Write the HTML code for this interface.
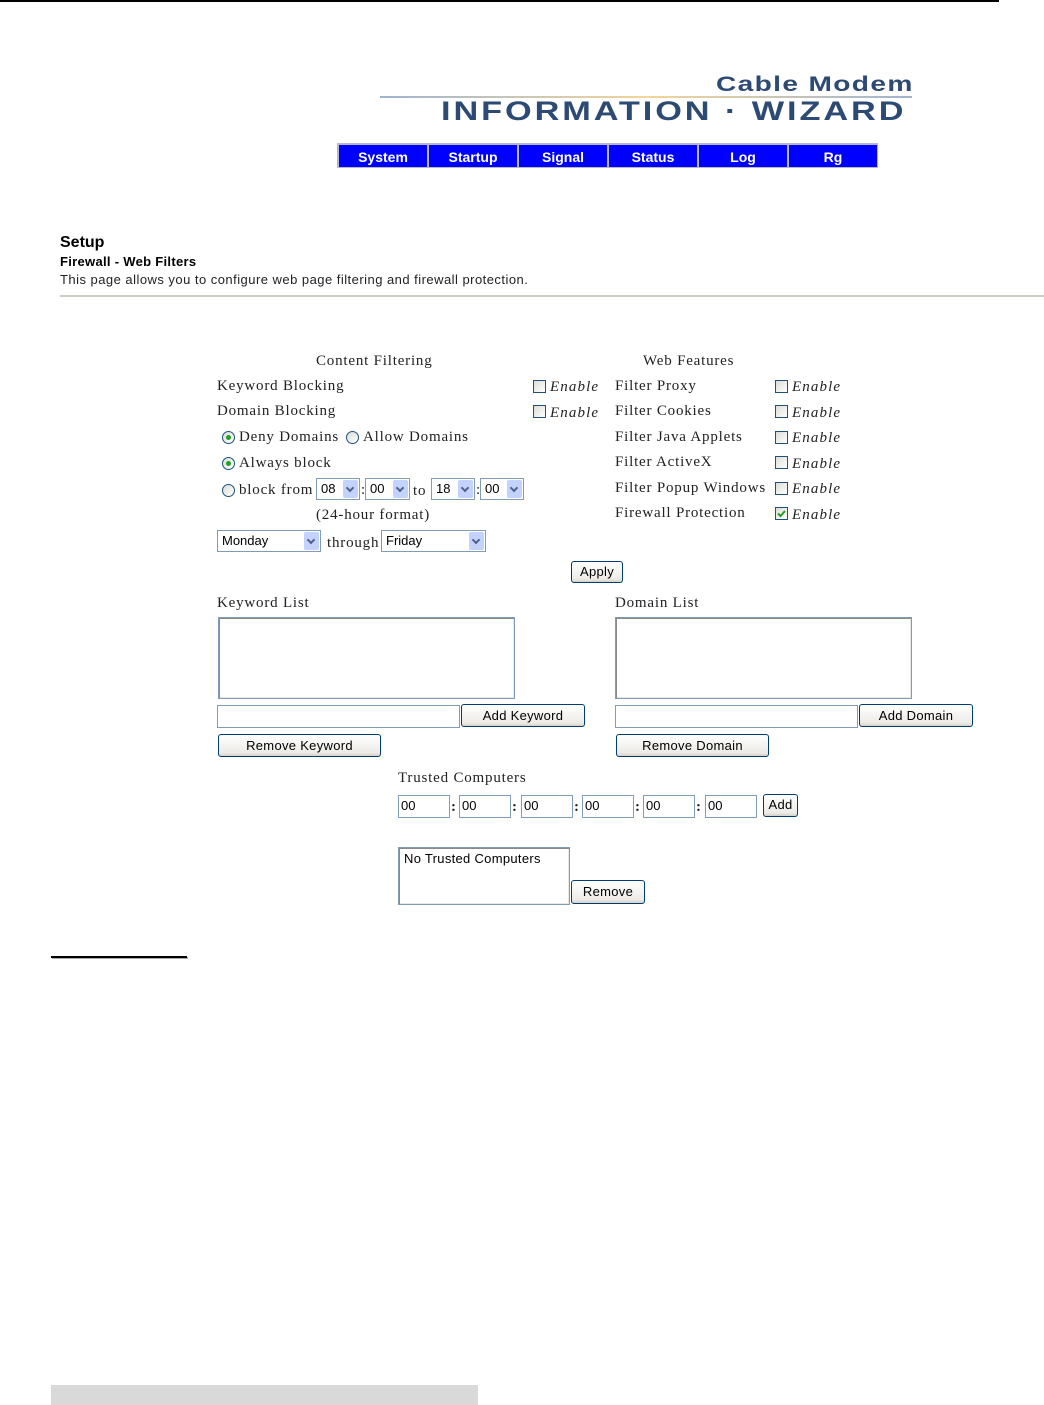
<!DOCTYPE html>
<html><head><meta charset="utf-8"><style>
html,body{margin:0;padding:0;background:#fff;width:1044px;height:1405px;overflow:hidden;position:relative}
.a{position:absolute;white-space:nowrap}
.s{font-family:"Liberation Serif",serif;font-size:15px;color:#222;line-height:18px;letter-spacing:0.8px}
.f{font-family:"Liberation Sans",sans-serif;color:#000}
.cb{position:absolute;width:11px;height:11px;border:1px solid #1c5180;background:linear-gradient(135deg,#dcdcd6,#fff)}
.en{font-family:"Liberation Serif",serif;font-style:italic;font-size:15px;color:#222;line-height:18px;letter-spacing:1.1px}
.rd{position:absolute;width:11px;height:11px;border:1px solid #1c5180;border-radius:50%;background:linear-gradient(135deg,#dcdcd6,#fff)}
.rd.on::after{content:"";position:absolute;left:3px;top:3px;width:5px;height:5px;border-radius:50%;background:#21a121}
.sel{position:absolute;height:20px;border:1px solid #7f9db9;background:#fff;font-family:"Liberation Sans",sans-serif;font-size:13px;line-height:20px;box-sizing:content-box}
.sel span{position:absolute;left:4px;top:0}
.sel i{position:absolute;right:1px;top:1px;width:15px;height:18px;background:#c3d3fd;border-radius:2px}
.sel i::after{content:"";position:absolute;left:4px;top:5px;width:4px;height:4px;border-right:2px solid #4d6185;border-bottom:2px solid #4d6185;transform:rotate(45deg)}
.btn{position:absolute;border:1px solid #003c74;border-radius:3px;background:linear-gradient(#fff,#ecebe6 85%,#d6d0c5);font-family:"Liberation Sans",sans-serif;font-size:13px;text-align:center;color:#000;box-sizing:border-box;letter-spacing:0.3px}
.in{position:absolute;border:1px solid #7f9db9;background:#fff;box-sizing:border-box;font-family:"Liberation Sans",sans-serif;font-size:13px;padding-left:2px;line-height:20px}
.ta{position:absolute;border:1px solid #7f9db9;background:#fff;box-sizing:border-box;box-shadow:inset 1px 1px 0 #8a8a86,inset -1px -1px 0 #e8e8e4}
.nav{position:absolute;top:144px;height:22px;width:88px;background:#0000ff;color:#fff;font-family:"Liberation Sans",sans-serif;font-weight:bold;font-size:14px;text-align:center;line-height:24px;border:1px solid #b8b8c8}
</style></head><body>
<div class="a" style="left:0;top:0;width:999px;height:2px;background:#000"></div>

<div class="a f" style="left:716px;top:73px;font-size:21px;font-weight:bold;color:#2c4a73;letter-spacing:1px;transform:scaleX(1.34);transform-origin:0 0">Cable Modem</div>
<div class="a" style="left:380px;top:96px;width:532px;height:2px;background:linear-gradient(90deg,#9fb4d0,#f2d59a 50%,#9fb4d0)"></div>
<div class="a f" style="left:441px;top:96px;font-size:27px;font-weight:bold;color:#2c4a73;letter-spacing:2.3px;transform:scaleX(1.27);transform-origin:0 0">INFORMATION · WIZARD</div>

<div class="a" style="left:337px;top:143px;width:541px;height:25px;background:#b8b8c8"></div>
<div class="nav" style="left:338px">System</div>
<div class="nav" style="left:428px">Startup</div>
<div class="nav" style="left:518px">Signal</div>
<div class="nav" style="left:608px">Status</div>
<div class="nav" style="left:698px">Log</div>
<div class="nav" style="left:788px">Rg</div>

<div class="a f" style="left:60px;top:234px;font-size:16px;font-weight:bold">Setup</div>
<div class="a f" style="left:60px;top:254px;font-size:13px;font-weight:bold;letter-spacing:0.3px">Firewall - Web Filters</div>
<div class="a f" style="left:60px;top:272px;font-size:13px;color:#222;letter-spacing:0.47px">This page allows you to configure web page filtering and firewall protection.</div>
<div class="a" style="left:60px;top:295px;width:984px;height:2px;background:#cfcbbd"></div>

<div class="a s" style="left:316px;top:352px">Content Filtering</div>
<div class="a s" style="left:643px;top:352px">Web Features</div>

<div class="a s" style="left:217px;top:377px">Keyword Blocking</div>
<div class="cb" style="left:533px;top:380px"></div><div class="a en" style="left:550px;top:378px">Enable</div>
<div class="a s" style="left:217px;top:402px">Domain Blocking</div>
<div class="cb" style="left:533px;top:405px"></div><div class="a en" style="left:550px;top:404px">Enable</div>
<div class="rd on" style="left:222px;top:431px"></div><div class="a s" style="left:239px;top:428px">Deny Domains</div>
<div class="rd" style="left:346px;top:431px"></div><div class="a s" style="left:363px;top:428px">Allow Domains</div>
<div class="rd on" style="left:222px;top:457px"></div><div class="a s" style="left:239px;top:454px">Always block</div>
<div class="rd" style="left:222px;top:484px"></div><div class="a s" style="left:239px;top:481px">block from</div>
<div class="sel" style="left:316px;top:478px;width:42px"><span>08</span><i></i></div>
<div class="a s" style="left:361px;top:481px">:</div>
<div class="sel" style="left:365px;top:478px;width:43px"><span>00</span><i></i></div>
<div class="a s" style="left:413px;top:482px">to</div>
<div class="sel" style="left:431px;top:478px;width:42px"><span>18</span><i></i></div>
<div class="a s" style="left:476px;top:481px">:</div>
<div class="sel" style="left:480px;top:478px;width:42px"><span>00</span><i></i></div>
<div class="a s" style="left:316px;top:506px">(24-hour format)</div>
<div class="sel" style="left:217px;top:530px;width:102px"><span>Monday</span><i></i></div>
<div class="a s" style="left:327px;top:534px">through</div>
<div class="sel" style="left:381px;top:530px;width:103px"><span>Friday</span><i></i></div>

<div class="a s" style="left:615px;top:377px">Filter Proxy</div>
<div class="a s" style="left:615px;top:402px">Filter Cookies</div>
<div class="a s" style="left:615px;top:428px">Filter Java Applets</div>
<div class="a s" style="left:615px;top:453px">Filter ActiveX</div>
<div class="a s" style="left:615px;top:479px">Filter Popup Windows</div>
<div class="a s" style="left:615px;top:504px">Firewall Protection</div>
<div class="cb" style="left:775px;top:380px"></div><div class="a en" style="left:792px;top:378px">Enable</div>
<div class="cb" style="left:775px;top:405px"></div><div class="a en" style="left:792px;top:404px">Enable</div>
<div class="cb" style="left:775px;top:431px"></div><div class="a en" style="left:792px;top:429px">Enable</div>
<div class="cb" style="left:775px;top:456px"></div><div class="a en" style="left:792px;top:455px">Enable</div>
<div class="cb" style="left:775px;top:482px"></div><div class="a en" style="left:792px;top:480px">Enable</div>
<div class="cb" style="left:775px;top:507px"><svg width="11" height="11" style="position:absolute;left:0;top:0"><path d="M2 5.5 L4.5 8 L9 3" stroke="#21a121" stroke-width="2" fill="none"/></svg></div><div class="a en" style="left:792px;top:506px">Enable</div>

<div class="btn" style="left:571px;top:561px;width:52px;height:22px;line-height:20px">Apply</div>

<div class="a s" style="left:217px;top:594px">Keyword List</div>
<div class="ta" style="left:218px;top:617px;width:297px;height:82px"></div>
<div class="in" style="left:217px;top:705px;width:243px;height:23px"></div>
<div class="btn" style="left:461px;top:704px;width:124px;height:23px;line-height:21px">Add Keyword</div>
<div class="btn" style="left:218px;top:734px;width:163px;height:23px;line-height:21px">Remove Keyword</div>

<div class="a s" style="left:615px;top:594px">Domain List</div>
<div class="ta" style="left:615px;top:617px;width:297px;height:82px"></div>
<div class="in" style="left:615px;top:705px;width:243px;height:23px"></div>
<div class="btn" style="left:859px;top:704px;width:114px;height:23px;line-height:21px">Add Domain</div>
<div class="btn" style="left:616px;top:734px;width:153px;height:23px;line-height:21px">Remove Domain</div>

<div class="a s" style="left:398px;top:769px">Trusted Computers</div>
<div class="in" style="left:398px;top:795px;width:52px;height:23px">00</div>
<div class="a s" style="left:451px;top:798px;font-weight:bold">:</div>
<div class="in" style="left:459px;top:795px;width:52px;height:23px">00</div>
<div class="a s" style="left:512px;top:798px;font-weight:bold">:</div>
<div class="in" style="left:521px;top:795px;width:52px;height:23px">00</div>
<div class="a s" style="left:574px;top:798px;font-weight:bold">:</div>
<div class="in" style="left:582px;top:795px;width:52px;height:23px">00</div>
<div class="a s" style="left:635px;top:798px;font-weight:bold">:</div>
<div class="in" style="left:643px;top:795px;width:52px;height:23px">00</div>
<div class="a s" style="left:696px;top:798px;font-weight:bold">:</div>
<div class="in" style="left:705px;top:795px;width:52px;height:23px">00</div>
<div class="btn" style="left:763px;top:794px;width:35px;height:23px;line-height:20px">Add</div>

<div class="ta" style="left:398px;top:847px;width:172px;height:58px;font-family:'Liberation Sans',sans-serif;font-size:13px;padding:3px 0 0 5px;letter-spacing:0.3px">No Trusted Computers</div>
<div class="btn" style="left:571px;top:880px;width:74px;height:24px;line-height:22px">Remove</div>

<div class="a" style="left:51px;top:956px;width:136px;height:2px;background:#000;box-shadow:1px 1px 0 #aaa"></div>
<div class="a" style="left:51px;top:1385px;width:427px;height:20px;background:#d9d9d9"></div>
</body></html>
